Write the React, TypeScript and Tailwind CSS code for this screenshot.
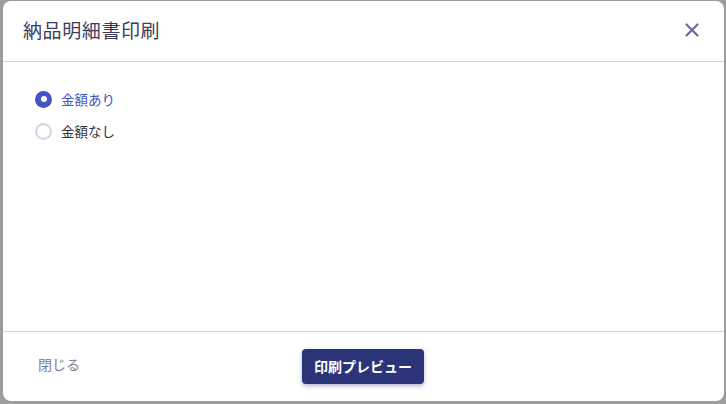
import { useState } from 'react'

const options = ['金額あり', '金額なし']

export default function App() {
  const [selected, setSelected] = useState(0)

  return (
    <div
      className="w-[726px] h-[404px] bg-[#9d9d9d] pt-[1px] pl-[3px] pr-[2px] pb-[3px] overflow-hidden"
      style={{ fontFamily: '"Noto Sans CJK JP", "Noto Sans", sans-serif' }}
    >
      <div className="w-full h-full bg-white rounded-[8px] flex flex-col overflow-hidden">
        {/* ヘッダー */}
        <div className="h-[61px] shrink-0 border-b border-[#cdd3df] pl-[20px] pr-[24px] flex items-center justify-between">
          <h2 className="text-[19px] tracking-[0.6px] text-[#393c5a] leading-none -mt-[3px]">納品明細書印刷</h2>
          <button className="w-[16px] h-[16px] flex items-center justify-center text-[#6b70a0] -mt-[2px]">
            <svg width="14" height="14" viewBox="0 0 14 14" fill="none">
              <path d="M1.5 1.5 L12.5 12.5 M12.5 1.5 L1.5 12.5" stroke="currentColor" strokeWidth="2.4" strokeLinecap="round" />
            </svg>
          </button>
        </div>

        {/* 本文 */}
        <div className="flex-1 pt-[21px] pl-[32px] flex flex-col">
          {options.map((label, i) => {
            const on = selected === i
            return (
              <label
                key={label}
                onClick={() => setSelected(i)}
                className="h-[32px] flex items-center gap-[9px] cursor-pointer"
              >
                <span
                  className={`w-[17px] h-[17px] rounded-full flex items-center justify-center ${
                    on ? 'bg-[#4454c3]' : 'border-2 border-[#cfd5e3] bg-white'
                  }`}
                >
                  {on && <span className="w-[6px] h-[6px] rounded-full bg-white" />}
                </span>
                <span className={`text-[13.5px] ${on ? 'text-[#4454c3]' : 'text-[#2e3140]'}`}>{label}</span>
              </label>
            )
          })}
        </div>

        {/* フッター */}
        <div className="h-[70px] shrink-0 border-t border-[#cdd3df] flex items-center pl-[35px] pr-[36px]">
          <div className="flex-1 flex items-center">
            <button className="text-[14px] leading-[20px] text-[#7a7e94] -mt-[6px]">閉じる</button>
          </div>
          <button className="h-[35px] w-[122px] -mt-[1px] rounded-[4px] bg-[#2b3477] text-white text-[14px] font-bold shadow-[0_2px_4px_rgba(40,50,120,0.35)]">
            印刷プレビュー
          </button>
          <div className="flex-1" />
        </div>
      </div>
    </div>
  )
}
